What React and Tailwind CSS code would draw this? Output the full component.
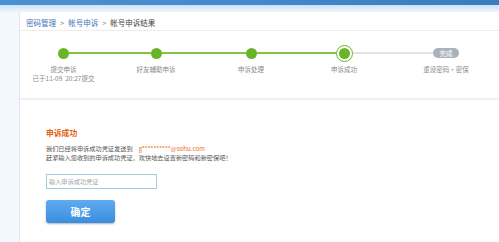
import React from "react";

const font = { fontFamily: '"Noto Sans CJK SC", "Noto Sans", sans-serif' };

function Bar({ color }) {
  return <div className={`flex-1 h-[2px] ${color}`} />;
}

function Step({ width, left, right, node, label, sub }) {
  return (
    <div className={`flex flex-col items-center ${width}`}>
      <div className="flex items-center w-full h-[18px]">
        <Bar color={left} />
        {node}
        <Bar color={right} />
      </div>
      <div className="mt-[3px] text-[6.5px] leading-[9px] text-[#8a8a8a] whitespace-pre text-center">
        <div>{label}</div>
        {sub && <div>{sub}</div>}
      </div>
    </div>
  );
}

const dot = <div className="w-[11px] h-[11px] rounded-full bg-[#6ab527] shrink-0" />;

export default function App() {
  return (
    <div className="w-[499px] h-[242px] overflow-hidden bg-[#f3f8fd] flex flex-col" style={font}>
      <div className="h-[5px] bg-gradient-to-r from-[#4b90d3] via-[#4389cd] to-[#3a7cc0] shrink-0" />
      <div className="h-[7px] bg-gradient-to-b from-[#c9e2f6] to-[#eef5fc] shrink-0" />
      <div className="flex flex-1">
        <div className="w-[20px] shrink-0 border-r border-[#e3e7eb]" />
        <div className="flex-1 bg-white flex flex-col">
          <div className="h-[19px] flex items-center pl-[6px] pt-[3px] text-[7.5px] leading-[9px] border-b border-[#ececec] shrink-0">
            <span className="text-[#3f73b5]">密码管理</span>
            <span className="text-[#888] mx-[4px]">&gt;</span>
            <span className="text-[#3f73b5]">帐号申诉</span>
            <span className="text-[#888] mx-[4px]">&gt;</span>
            <span className="text-[#444]">帐号申诉结果</span>
          </div>
          <div className="h-[69px] border-b-2 border-[#eff1f3] shrink-0 pt-[13px] flex">
            <Step width="w-[87px]" left="bg-transparent" right="bg-[#85c43c]" node={dot} label="提交申诉" sub="已于11-09  20:27提交" />
            <Step width="w-[98px]" left="bg-[#85c43c]" right="bg-[#85c43c]" node={dot} label="好友辅助申诉" />
            <Step width="w-[92px]" left="bg-[#85c43c]" right="bg-[#85c43c]" node={dot} label="申诉处理" />
            <Step
              width="w-[94px]"
              left="bg-[#85c43c]"
              right="bg-[#e3e3e3]"
              node={
                <div className="w-[17px] h-[17px] rounded-full border border-[#6ab527] bg-white flex items-center justify-center shrink-0">
                  <div className="w-[11px] h-[11px] rounded-full bg-[#6ab527]" />
                </div>
              }
              label="申诉成功"
            />
            <Step
              width="w-[110px]"
              left="bg-[#e3e3e3]"
              right="bg-transparent"
              node={
                <div className="w-[26px] h-[10px] rounded-full bg-[#a9b2bb] text-white text-[6.5px] leading-[10px] text-center shrink-0">
                  完成
                </div>
              }
              label="重设密码・密保"
            />
          </div>
          <div className="pl-[26px] pt-[28px]">
            <div className="text-[7.8px] leading-[10px] font-bold text-[#e35f0e]">申诉成功</div>
            <div className="mt-[6px] text-[6.2px] leading-[9px] text-[#555]">
              <div>
                我们已经将申诉成功凭证发送到<span className="ml-[6px] text-[#f06a1a]">g**********@sohu.com</span>
              </div>
              <div>赶紧输入您收到的申诉成功凭证，欢快地去设置新密码和新密保吧！</div>
            </div>
            <div className="mt-[12px] w-[111px] h-[15px] border border-[#a9cbd9] flex items-center pl-[2px] text-[6.2px] text-[#a5a5a5]">
              输入申诉成功凭证
            </div>
            <div className="mt-[11px] w-[69px] h-[23px] rounded-[3px] bg-gradient-to-b from-[#5eabf0] to-[#3b8de0] shadow-[0_1px_2px_rgba(0,0,0,0.3)] flex items-center justify-center text-white text-[10px] font-bold">
              确定
            </div>
          </div>
        </div>
      </div>
    </div>
  );
}
